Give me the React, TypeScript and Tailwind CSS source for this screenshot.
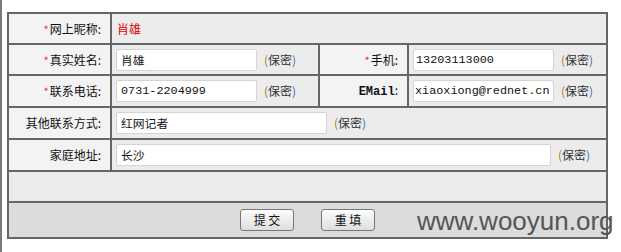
import React from 'react';

const Star = () => <span className="text-[#e0306a] text-[11px] mr-[1px]">*</span>;

const Secret = () => (
  <span className="ml-[7px] text-[#333] text-[12px] leading-[22px]">
    <span className="text-[#b07a2a]">(</span>保密<span className="text-[#3a6fb0]">)</span>
  </span>
);

function Field({ value, width, pad = 'px-[4px]' }: { value: string; width: string; pad?: string }) {
  return (
    <input
      readOnly
      value={value}
      className={`${width} ${pad} h-[22px] bg-white border border-[#d4d4d4] rounded-[2px] text-[11.8px] text-[#111] outline-none`}
      style={{ fontFamily: '"Liberation Mono", "Noto Sans CJK SC", monospace' }}
    />
  );
}

export default function App() {
  const label = 'bg-[#f3f3f3] border-2 border-[#666] text-right pr-[9px] text-[12px] text-[#111] whitespace-nowrap';
  const cell = 'bg-[#ececec] border-2 border-[#666] pl-[4px] text-[12px] whitespace-nowrap';

  return (
    <div
      className="relative h-[252px] w-[621px] bg-white border-l-2 border-[#7a7a7a] pl-[5px] pt-[12px] overflow-hidden"
      style={{ fontFamily: '"Noto Sans CJK SC", "Liberation Sans", sans-serif' }}
    >
      <table className="border-collapse w-[599px] table-fixed">
        <colgroup>
          <col className="w-[103px]" />
          <col className="w-[208px]" />
          <col className="w-[89px]" />
          <col className="w-[199px]" />
        </colgroup>
        <tbody>
          <tr className="h-[31px]">
            <td className={label}><Star />网上昵称:</td>
            <td className={`${cell} pl-[5px] text-[#e00000]`} colSpan={3}>肖雄</td>
          </tr>
          <tr className="h-[31px]">
            <td className={label}><Star />真实姓名:</td>
            <td className={cell}>
              <div className="flex items-center"><Field value="肖雄" width="w-[141px]" /><Secret /></div>
            </td>
            <td className={label}><Star />手机:</td>
            <td className={cell}>
              <div className="flex items-center"><Field value="13203113000" width="w-[141px]" pad="px-[2px]" /><Secret /></div>
            </td>
          </tr>
          <tr className="h-[32px]">
            <td className={label}><Star />联系电话:</td>
            <td className={cell}>
              <div className="flex items-center"><Field value="0731-2204999" width="w-[141px]" /><Secret /></div>
            </td>
            <td className={label}>
              <span className="font-bold" style={{ fontFamily: '"Liberation Mono", monospace' }}>EMail</span>:
            </td>
            <td className={cell}>
              <div className="flex items-center"><Field value="xiaoxiong@rednet.cn" width="w-[141px]" pad="px-[1px]" /><Secret /></div>
            </td>
          </tr>
          <tr className="h-[32px]">
            <td className={label}>其他联系方式:</td>
            <td className={cell} colSpan={3}>
              <div className="flex items-center"><Field value="红网记者" width="w-[211px]" /><Secret /></div>
            </td>
          </tr>
          <tr className="h-[32px]">
            <td className={label}>家庭地址:</td>
            <td className={cell} colSpan={3}>
              <div className="flex items-center"><Field value="长沙" width="w-[435px]" /><Secret /></div>
            </td>
          </tr>
          <tr className="h-[31px]">
            <td className="bg-[#ebebeb] border-2 border-[#666]" colSpan={4}></td>
          </tr>
          <tr className="h-[36px]">
            <td className="bg-[#dcdcdc] border-2 border-[#666] text-center" colSpan={4}>
              <div className="flex justify-center gap-[27px]">
                <button className="w-[54px] h-[22px] border border-[#777] rounded-[3px] bg-gradient-to-b from-[#fdfdfd] to-[#dedede] text-[12px] text-[#111]">提 交</button>
                <button className="w-[54px] h-[22px] border border-[#777] rounded-[3px] bg-gradient-to-b from-[#fdfdfd] to-[#dedede] text-[12px] text-[#111]">重 填</button>
              </div>
            </td>
          </tr>
        </tbody>
      </table>
      <div
        className="absolute left-[415px] top-[208px] text-[26px] leading-none text-[#555]"
        style={{ fontFamily: '"Liberation Sans", Arial, sans-serif' }}
      >
        www.wooyun.org
      </div>
    </div>
  );
}
